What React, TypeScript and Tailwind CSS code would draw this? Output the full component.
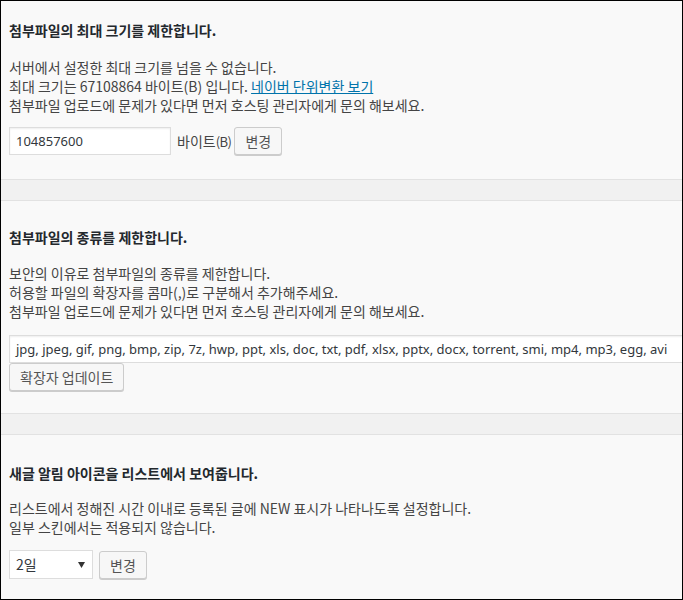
import React from "react";

const font = { fontFamily: "'Noto Sans CJK KR', sans-serif" };
const inputFont = { fontFamily: "'Noto Sans', 'Noto Sans CJK KR', sans-serif" };

function Btn({ children, className = "" }: { children: React.ReactNode; className?: string }) {
  return (
    <button
      style={font}
      className={`h-[28px] rounded-[3px] border border-[#cccccc] bg-[#f7f7f7] px-[10px] text-[14px] leading-[26px] text-[#555555] shadow-[0_1px_0_#cccccc] ${className}`}
    >
      {children}
    </button>
  );
}

function Band() {
  return <div className="h-[22px] border-y border-[#e2e2e2] bg-[#f1f1f1]" />;
}

export default function App() {
  return (
    <div
      style={font}
      className="box-border h-[600px] w-[683px] overflow-hidden border border-black bg-[#f9f9f9] text-[14px] leading-[19px] text-[#444444]"
    >
      {/* Section 1 */}
      <div className="h-[178px] px-[8px] pt-[20px]">
        <div className="font-bold text-[#23282d]">첨부파일의 최대 크기를 제한합니다.</div>
        <div className="mt-[18px]">
          <p>서버에서 설정한 최대 크기를 넘을 수 없습니다.</p>
          <p>
            최대 크기는 67108864 바이트(B) 입니다.{" "}
            <a className="text-[#0073aa] underline">네이버 단위변환 보기</a>
          </p>
          <p>첨부파일 업로드에 문제가 있다면 먼저 호스팅 관리자에게 문의 해보세요.</p>
        </div>
        <div className="mt-[12px] flex items-center">
          <div
            style={inputFont}
            className="box-border h-[28px] w-[162px] border border-[#dddddd] bg-white px-[6px] text-[13px] leading-[26px] text-[#32373c] shadow-[inset_0_1px_2px_rgba(0,0,0,0.07)]"
          >
            104857600
          </div>
          <span className="ml-[6px] mr-[3px] whitespace-nowrap">
            바이트<span className="text-[13px] tracking-[-0.5px]">(B)</span>
          </span>
          <Btn>변경</Btn>
        </div>
      </div>

      <Band />

      {/* Section 2 */}
      <div className="h-[212px] px-[8px] pt-[27px]">
        <div className="font-bold text-[#23282d]">첨부파일의 종류를 제한합니다.</div>
        <div className="mt-[17px]">
          <p>보안의 이유로 첨부파일의 종류를 제한합니다.</p>
          <p>허용할 파일의 확장자를 콤마(,)로 구분해서 추가해주세요.</p>
          <p>첨부파일 업로드에 문제가 있다면 먼저 호스팅 관리자에게 문의 해보세요.</p>
        </div>
        <div
          style={inputFont}
          className="mt-[14px] box-border h-[28px] w-[700px] whitespace-nowrap border border-[#dddddd] bg-white px-[6px] text-[13px] leading-[26px] text-[#32373c] shadow-[inset_0_1px_2px_rgba(0,0,0,0.07)]"
        >
          jpg, jpeg, gif, png, bmp, zip, 7z, hwp, ppt, xls, doc, txt, pdf, xlsx, pptx, docx, torrent, smi, mp4, mp3, egg, avi
        </div>
        <Btn>확장자 업데이트</Btn>
      </div>

      <Band />

      {/* Section 3 */}
      <div className="px-[8px] pt-[29px]">
        <div className="font-bold text-[#23282d]">새글 알림 아이콘을 리스트에서 보여줍니다.</div>
        <div className="mt-[16px]">
          <p>리스트에서 정해진 시간 이내로 등록된 글에 NEW 표시가 나타나도록 설정합니다.</p>
          <p>일부 스킨에서는 적용되지 않습니다.</p>
        </div>
        <div className="mt-[13px] flex items-center gap-[6px]">
          <div className="box-border flex h-[29px] w-[84px] items-center justify-between border border-[#dddddd] bg-white pl-[6px] pr-[7px] text-[14px] text-[#32373c]">
            <span>2일</span>
            <svg width="7" height="6" viewBox="0 0 7 6">
              <path d="M0 0 L7 0 L3.5 6 Z" fill="#333" />
            </svg>
          </div>
          <Btn>변경</Btn>
        </div>
      </div>
    </div>
  );
}
